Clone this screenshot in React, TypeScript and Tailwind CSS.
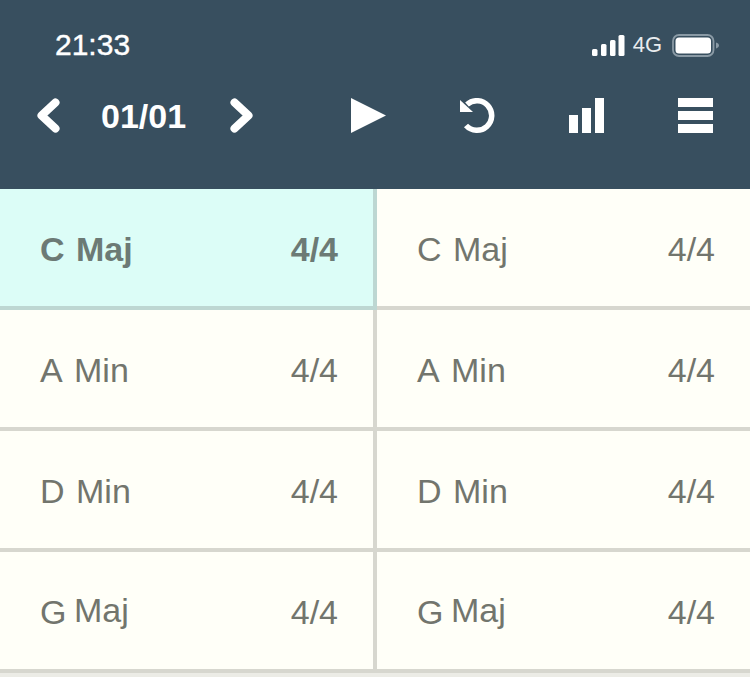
import React from 'react';

const rows = [
  { root: 'C', kind: 'Maj', rootWidth: 'w-[36px]', shift: false },
  { root: 'A', kind: 'Min', rootWidth: 'w-[34px]', shift: false },
  { root: 'D', kind: 'Min', rootWidth: 'w-[36px]', shift: false },
  { root: 'G', kind: 'Maj', rootWidth: 'w-[34px]', shift: true },
];

const Cell: React.FC<{ root: string; kind: string; rootWidth: string; shift: boolean; active?: boolean; left?: boolean }> = ({
  root,
  kind,
  rootWidth,
  shift,
  active,
  left,
}) => (
  <div
    className={`flex h-[121px] items-center justify-between border-b-4 pt-[3px] pl-[40px] pr-[35px] text-[34px] ${
      left ? 'w-[377px] border-r-4' : 'w-[373px]'
    } ${
      active
        ? 'border-[#bdd7d2] bg-[#dcfdf7] font-bold text-[#6c7a75]'
        : 'border-[#d7d7cf] bg-[#fffff8] text-[#72756d]'
    }`}
  >
    <span className="flex items-center">
      <span className={rootWidth}>{root}</span>
      <span className={shift ? '-translate-y-[2px]' : ''}>{kind}</span>
    </span>
    <span>4/4</span>
  </div>
);

export default function App() {
  return (
    <div className="min-h-[677px] w-[750px] bg-[#ecece6] font-['Liberation_Sans',Arial,sans-serif]">
      {/* Header */}
      <div className="h-[189px] bg-[#384f5f] text-white">
        <div className="flex h-[90px] items-center justify-between pl-[55px] pr-[31px]">
          <span className="text-[30px] leading-none [-webkit-text-stroke:0.4px_white]">21:33</span>
          <div className="flex items-center">
            <svg width="33" height="21" viewBox="0 0 33 21" fill="white">
              <rect x="0" y="14" width="5.5" height="7" rx="1.5" />
              <rect x="9" y="9" width="5.5" height="12" rx="1.5" />
              <rect x="18" y="5" width="5.5" height="16" rx="1.5" />
              <rect x="26.5" y="0" width="6" height="21" rx="1.5" />
            </svg>
            <span className="ml-[8px] text-[22px] leading-none text-[#e8ecee]">4G</span>
            <svg className="ml-[10px]" width="47" height="23" viewBox="0 0 47 23">
              <rect x="1" y="1" width="40.5" height="21" rx="6" fill="none" stroke="#8a9aa5" strokeWidth="1.8" />
              <rect x="3.5" y="3.5" width="35.5" height="16" rx="3.5" fill="white" />
              <path d="M44 8.5c1.6.4 3 1.6 3 3s-1.4 2.6-3 3z" fill="#8a9aa5" />
            </svg>
          </div>
        </div>
        <div className="flex h-[53px] items-center pl-[37px] pb-[2px]">
          <svg width="24" height="35" viewBox="0 0 24 35" fill="none" stroke="white" strokeWidth="8" strokeLinecap="round" strokeLinejoin="round">
            <path d="M18.5 4.5 4.5 17.5l14 13" />
          </svg>
          <span className="ml-[40px] w-[86px] text-[34px] leading-none font-bold">01/01</span>
          <svg className="ml-[42px]" width="24" height="35" viewBox="0 0 24 35" fill="none" stroke="white" strokeWidth="8" strokeLinecap="round" strokeLinejoin="round">
            <path d="M5.5 4.5 19.5 17.5l-14 13" />
          </svg>
          <svg className="ml-[98px]" width="35" height="35" viewBox="0 0 35 35" fill="white">
            <path d="M0 0 35 17.5 0 35z" />
          </svg>
          <svg className="ml-[74px]" width="36" height="36" viewBox="0 0 36 36" fill="none">
            <path d="M7 6.5A14.8 14.8 0 1 1 6 27.5" stroke="white" strokeWidth="5.5" />
            <path d="M0 2V14H13z" fill="white" />
          </svg>
          <svg className="ml-[73px]" width="35" height="35" viewBox="0 0 35 35" fill="white">
            <rect x="0" y="17" width="9" height="18" />
            <rect x="13" y="10" width="9" height="25" />
            <rect x="26" y="0" width="9" height="35" />
          </svg>
          <svg className="ml-[74px]" width="35" height="35" viewBox="0 0 35 35" fill="white">
            <rect x="0" y="0" width="35" height="9" />
            <rect x="0" y="13" width="35" height="9" />
            <rect x="0" y="26" width="35" height="9" />
          </svg>
        </div>
      </div>
      {/* Chord grid */}
      <div className="flex flex-col">
        {rows.map((row, i) => (
          <div key={row.root} className="flex">
            <Cell {...row} left active={i === 0} />
            <Cell {...row} />
          </div>
        ))}
      </div>
    </div>
  );
}
